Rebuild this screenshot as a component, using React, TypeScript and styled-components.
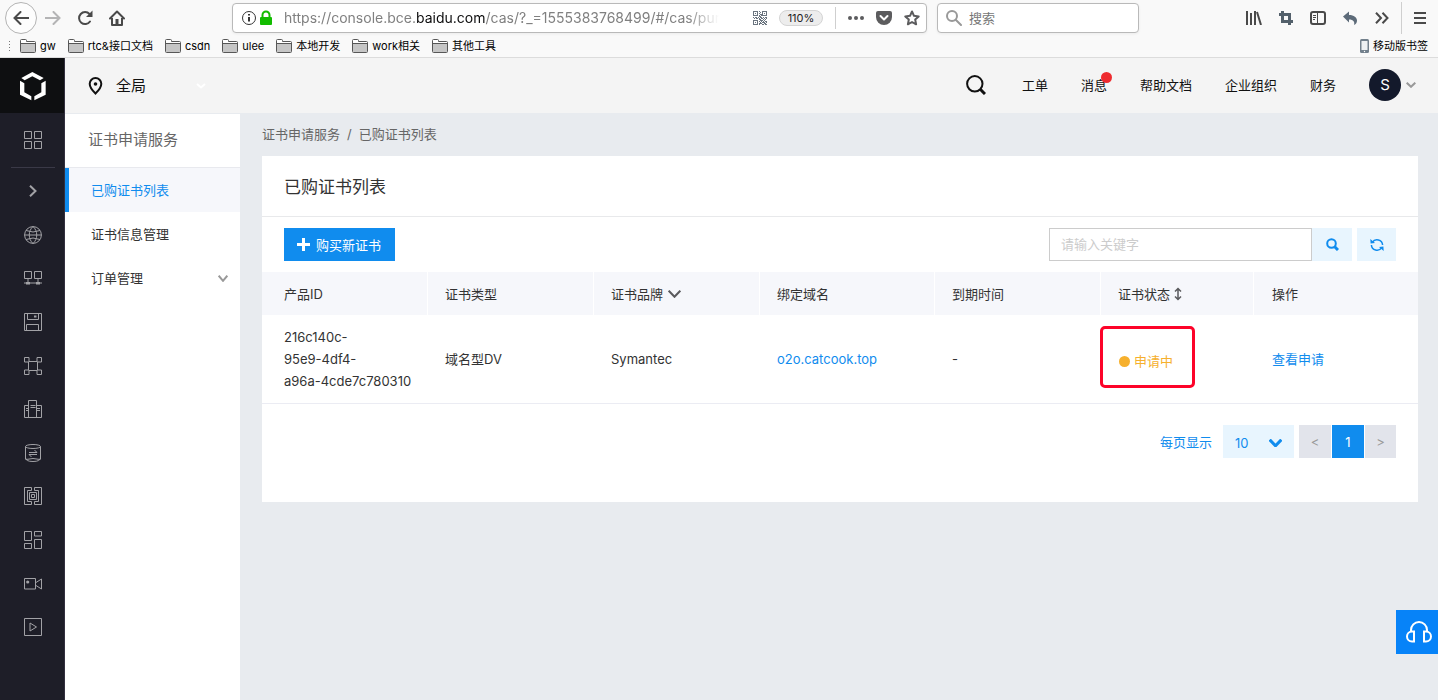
import React from 'react';
import styled, { createGlobalStyle } from 'styled-components';

const blue = '#108cee';
const paleBlue = '#e8f5fe';
const textDark = '#333';

const GlobalStyle = createGlobalStyle`
  * { box-sizing: border-box; }
  html, body, #root { height: 100%; }
  body {
    margin: 0;
    font-family: Inter, "Noto Sans CJK SC", sans-serif;
    font-size: 13px;
    line-height: 22px;
    color: ${textDark};
    background: #e8ebef;
  }
  button, input, select { font: inherit; color: inherit; margin: 0; }
  button { border: 0; padding: 0; background: none; cursor: pointer; }
  a { color: inherit; text-decoration: none; }
  ul { list-style: none; margin: 0; padding: 0; }
  svg { display: block; flex: none; }
`;

const Page = styled.div`
  min-height: 100%;
  display: flex;
  flex-direction: column;
`;

/* ---------- browser chrome ---------- */

const Chrome = styled.header`
  background: #f9f9f9;
  border-bottom: 1px solid #dcdcdc;
`;

const NavBar = styled.div`
  display: flex;
  align-items: center;
  height: 36px;
  padding: 0 0 0 5px;
`;

const ToolButton = styled.button<{ $width?: number }>`
  display: flex;
  align-items: center;
  justify-content: center;
  flex: none;
  width: ${(p) => p.$width ?? 32}px;
  height: 32px;
  color: #4a4a4a;
`;

const BackButton = styled(ToolButton)`
  border: 1px solid #b4b4b4;
  border-radius: 50%;
  background: #fdfdfd;
`;

const Spacer = styled.div`
  flex: 0 1 99px;
`;

const Field = styled.div`
  display: flex;
  align-items: center;
  height: 30px;
  border: 1px solid #b9b9b9;
  border-radius: 4px;
  background: #fff;
  box-shadow: 0 1px 3px rgba(0, 0, 0, 0.06);
`;

const UrlField = styled(Field)`
  flex: 1;
  min-width: 0;
  padding: 0 6px 0 8px;
`;

const UrlText = styled.div`
  flex: 1;
  min-width: 0;
  margin: 0 34px 0 9px;
  overflow: hidden;
  white-space: nowrap;
  font-size: 14px;
  color: #808080;
  mask-image: linear-gradient(to left, transparent, #000 32px);
  strong { font-weight: 400; color: #0c0c0d; }
`;

const Zoom = styled.button`
  width: 44px;
  height: 16px;
  margin: 0 12px;
  border: 1px solid #d4d4d4;
  border-radius: 8px;
  background: #ededed;
  color: #222;
  font-size: 11px;
  line-height: 14px;
`;

const Divider = styled.div<{ $tall?: boolean }>`
  flex: none;
  width: 1px;
  height: ${(p) => (p.$tall ? 32 : 22)}px;
  margin-left: ${(p) => (p.$tall ? 3 : 0)}px;
  background: #cfcfcf;
`;

const UrlActions = styled.div`
  display: flex;
  align-items: center;
  gap: 12px;
  margin-left: 12px;
  color: #5c5c5e;
`;

const SearchField = styled(Field)`
  flex: none;
  width: 202px;
  margin-left: 10px;
  padding: 0 8px;
  gap: 7px;
  color: #999;
  input {
    flex: 1;
    min-width: 0;
    border: 0;
    padding: 0;
    outline: 0;
    background: none;
    &::placeholder { color: #777; opacity: 1; }
  }
`;

const Bookmarks = styled.nav`
  display: flex;
  align-items: center;
  gap: 12px;
  height: 21px;
  padding: 0 10px 1px 9px;
  font-size: 11px;
  line-height: 16px;
  color: #000;
`;

const Grip = styled.span`
  width: 1px;
  height: 11px;
  margin-right: -2px;
  background: repeating-linear-gradient(#777 0 1px, transparent 1px 3px);
`;

const Bookmark = styled.a<{ $end?: boolean }>`
  display: flex;
  align-items: center;
  gap: 4px;
  white-space: nowrap;
  margin-left: ${(p) => (p.$end ? 'auto' : '0')};
`;

/* ---------- console shell ---------- */

const Shell = styled.div`
  flex: 1;
  display: flex;
`;

const Rail = styled.aside`
  flex: none;
  width: 65px;
  border-right: 1px solid #33303f;
  background: #1e1e28;
  color: #a2a2a6;
`;

const Logo = styled.a`
  display: flex;
  align-items: center;
  justify-content: center;
  height: 55px;
  padding-left: 2px;
  background: #0e0f11;
  color: #fff;
`;

const RailButton = styled.button<{ $height?: number }>`
  display: flex;
  align-items: center;
  justify-content: center;
  width: 100%;
  height: ${(p) => (p.$height ? `${p.$height}px` : '100%')};
  padding-left: 2px;
`;

const RailRule = styled.div`
  height: 1px;
  margin: 0 9px 0 11px;
  background: #3a3947;
`;

const RailList = styled.ul`
  display: grid;
  grid-template-rows: repeat(10, 1fr);
  height: 436px;
`;

const Body = styled.div`
  flex: 1;
  min-width: 0;
  display: flex;
  flex-direction: column;
`;

const TopBar = styled.div`
  display: flex;
  align-items: center;
  justify-content: space-between;
  height: 55px;
  padding: 0 22px 0 23px;
  background: #f4f4f4;
`;

const Region = styled.button`
  display: flex;
  align-items: center;
  gap: 13px;
  font-size: 15px;
  color: #111;
  svg:last-child { margin-left: 37px; }
`;

const TopLinks = styled.nav`
  display: flex;
  align-items: center;
  gap: 33px;
  padding-bottom: 2px;
  color: #111;
`;

const FindButton = styled.button`
  margin-right: 3px;
`;

const TopLink = styled.a`
  position: relative;
`;

const Dot = styled.span`
  position: absolute;
  top: -2px;
  right: -5px;
  width: 11px;
  height: 11px;
  border-radius: 50%;
  background: #ee2b2f;
`;

const Account = styled.button`
  display: flex;
  align-items: center;
  gap: 5px;
  color: #999;
`;

const Avatar = styled.span`
  width: 32px;
  height: 32px;
  border-radius: 50%;
  background: #13192b;
  color: #fff;
  font-size: 15px;
  line-height: 32px;
`;

const Content = styled.div`
  flex: 1;
  display: flex;
`;

const Side = styled.nav`
  flex: none;
  width: 175px;
  border-top: 1px solid #e8ebef;
  background: #fff;
`;

const SideTitle = styled.h2`
  margin: 0;
  padding: 14px 23px 16px;
  border-bottom: 1px solid #e8e9ee;
  font-size: 15px;
  font-weight: 400;
  line-height: 23px;
  color: #666;
`;

const SideItem = styled.a<{ $active?: boolean }>`
  display: flex;
  align-items: center;
  justify-content: space-between;
  height: 44px;
  padding: 0 12px 0 22px;
  border-left: 4px solid ${(p) => (p.$active ? blue : 'transparent')};
  background: ${(p) => (p.$active ? '#f6f7fb' : 'transparent')};
  color: ${(p) => (p.$active ? blue : textDark)};
  svg { color: #999; }
`;

const Main = styled.main`
  flex: 1;
  min-width: 0;
  padding: 0 20px 0 22px;
`;

const Crumbs = styled.nav`
  display: flex;
  gap: 7px;
  padding: 10px 0 11px;
  color: #666;
`;

const Card = styled.section`
  padding-bottom: 44px;
  background: #fff;
`;

const CardTitle = styled.h1`
  margin: 0;
  padding: 20px 22px 18px;
  border-bottom: 1px solid #e8e9eb;
  font-size: 17px;
  font-weight: 400;
  line-height: 22px;
`;

const Toolbar = styled.div`
  display: flex;
  align-items: center;
  justify-content: space-between;
  padding: 11px 22px;
`;

const BuyButton = styled.button`
  display: flex;
  align-items: center;
  gap: 6px;
  height: 33px;
  padding: 0 14px 0 13px;
  background: ${blue};
  color: #fff;
`;

const SearchForm = styled.form`
  display: flex;
`;

const Keyword = styled.input`
  width: 263px;
  height: 33px;
  padding: 0 11px 1px;
  border: 1px solid #ccc;
  border-radius: 0;
  outline: 0;
  &::placeholder { color: #ccc; opacity: 1; }
`;

const PaleButton = styled.button<{ $apart?: boolean }>`
  display: flex;
  align-items: center;
  justify-content: center;
  width: ${(p) => (p.$apart ? 39 : 40)}px;
  height: 33px;
  margin-left: ${(p) => (p.$apart ? 5 : 0)}px;
  background: ${paleBlue};
  color: ${blue};
`;

const Table = styled.table`
  width: 100%;
  table-layout: fixed;
  border-collapse: separate;
  border-spacing: 0;
  th, td { text-align: left; font-weight: 400; padding-left: 17px; }
  th:first-child, td:first-child { padding-left: 22px; }
  th:last-child, td:last-child { padding-left: 18px; }
  th {
    height: 43px;
    padding-top: 0;
    padding-bottom: 0;
    background: #f6f7fb;
    border-right: 1px solid #fff;
  }
  th:last-child { border-right: 0; }
  td {
    position: relative;
    padding-top: 11px;
    padding-bottom: 11px;
    border-bottom: 1px solid #ebecf3;
  }
`;

const HeadButton = styled.button<{ $gap: number }>`
  display: flex;
  align-items: center;
  gap: ${(p) => p.$gap}px;
  svg { color: #5a5a5d; }
`;

const IdLine = styled.span`
  display: block;
`;

const BlueLink = styled.a`
  color: ${blue};
`;

const Status = styled.span`
  display: flex;
  align-items: center;
  gap: 4px;
  padding: 4px 0 0 1px;
  color: #f6b02d;
  &::before {
    content: '';
    width: 11px;
    height: 11px;
    border-radius: 50%;
    background: #f6b02d;
  }
`;

const Highlight = styled.span`
  position: absolute;
  top: 11px;
  left: -1px;
  width: 95px;
  height: 62px;
  border: 3px solid #fd0329;
  border-radius: 5px;
  pointer-events: none;
`;

const Pager = styled.div`
  display: flex;
  align-items: center;
  justify-content: flex-end;
  padding: 21px 22px 0;
  color: ${blue};
`;

const SizeBox = styled.span`
  position: relative;
  margin: 0 5px 0 11px;
  select {
    display: block;
    appearance: none;
    width: 71px;
    height: 33px;
    padding: 2px 12px 0;
    border: 0;
    border-radius: 0;
    background: ${paleBlue};
  }
  svg {
    position: absolute;
    top: 14px;
    right: 12px;
    pointer-events: none;
  }
`;

const PageList = styled.div`
  display: flex;
  gap: 1px;
`;

const PageButton = styled.button<{ $current?: boolean }>`
  width: 32px;
  height: 33px;
  background: ${(p) => (p.$current ? blue : '#e2e4eb')};
  color: ${(p) => (p.$current ? '#fff' : '#999')};
  &:last-child { width: 31px; }
`;

const Support = styled.button`
  position: fixed;
  right: 0;
  bottom: 46px;
  display: flex;
  align-items: center;
  justify-content: center;
  width: 42px;
  height: 44px;
  padding-left: 3px;
  background: #0783f8;
  color: #fff;
`;

/* ---------- icons ---------- */

type IconProps = { w: number; h: number; sw?: number; fill?: boolean; children: React.ReactNode };

const Icon = ({ w, h, sw = 1, fill, children }: IconProps) => (
  <svg
    width={w}
    height={h}
    viewBox={`0 0 ${w} ${h}`}
    fill={fill ? 'currentColor' : 'none'}
    stroke={fill ? 'none' : 'currentColor'}
    strokeWidth={sw}
    aria-hidden="true"
  >
    {children}
  </svg>
);

const Chevron = ({ w = 10, h = 6, sw = 2 }: { w?: number; h?: number; sw?: number }) => (
  <Icon w={w} h={h} sw={sw}>
    <path d={`M.7 .7 L${w / 2} ${h - 1.2} L${w - 0.7} .7`} />
  </Icon>
);

const Folder = () => (
  <Icon w={16} h={14}>
    <path d="M.5 1.5q0-1 1-1h4q1 0 1 1v1h8q1 0 1 1v9q0 1-1 1h-13q-1 0-1-1z" fill="#fff" stroke="#575757" />
    <path d="M1 5h14v7.5q0 .5-.5.5h-13q-.5 0-.5-.5z" fill="#c6c6c6" stroke="none" />
    <path d="M1 4.5h14" stroke="#575757" />
  </Icon>
);

const qrCells = [
  '11111010011111', '10001001010001', '10101010010101', '10001001110001', '11111010111111', '00000011000000',
  '10110101101011', '01011010110101', '00000011001010', '11111001110100', '10001010101011', '10101001011101',
  '10001011100110', '11111010011011',
];

const QrIcon = () => (
  <Icon w={14} h={14} fill>
    {qrCells.flatMap((row, y) =>
      [...row].map((c, x) => (c === '1' ? <rect key={`${x}-${y}`} x={x} y={y} width="1" height="1" fill="#6a747f" /> : null)),
    )}
  </Icon>
);

const LogoIcon = () => (
  <svg width="28" height="30" viewBox="60 210 84 90" fill="currentColor" aria-hidden="true">
    <path d="M67 231 100 213l34 18-11 7-23-12-23 12z" />
    <path d="M63 239l13 8v27l21 12v12L63 281z" />
    <path d="M140 239l-13 8v27l-21 12v12l34-17z" />
  </svg>
);

const railIcons: [string, number, React.ReactNode][] = [
  ['网络', 18, <><circle cx="9" cy="9" r="8.4" /><path d="M9 .5C4 5 4 13 9 17.500C14 13 14 5 9 .5M.5 9h17M2 4.500q7 3 14 0M2 13.500q7-3 14 0" /></>],
  ['连接', 14, <><path d="M.5 .5h7v7h-7zM10.500 .5h7v7h-7zM4 8v4M14 8v4M0 12h18" /><path d="M2 11h4v2.500H2zM12 11h4v2.500h-4z" fill="currentColor" stroke="none" /></>],
  ['存储', 18, <><path d="M.5 .5h17v17H.5zM3.500 .5v6h11v-6M2.500 17.500v-6h12v6" /><path d="M10 2.500h2.500v2H10z" fill="currentColor" stroke="none" /></>],
  ['集群', 18, <path d="M.5 .5h4.500v4.500H.5zM13 .5h4.500v4.500H13zM.5 13h4.500v4.500H.5zM13 13h4.500v4.500H13zM5 4.500h8M5 13.500h8M4.500 5v8M13.500 5v8" />],
  ['机房', 18, <path d="M4.500 17.500V.5h8v17M4.500 5.500h-4v12h17v-12h-5M6.500 5.500h5M6.500 7.500h5M2 8.500h2.500M2 10.500h2.500M12.500 8.500H16M12.500 10.500H16" />],
  ['数据库', 18, <><path d="M1.500 2.500v13M16.500 2.500v13" /><ellipse cx="9" cy="2.500" rx="7.500" ry="2" /><path d="M1.500 13.500q0 4 7.500 4t7.500-4M2 15.500q7-2 14 0M5 8.500h8M10.500 6l2.500 2.500M13 10.500H5l2.500 2.500" /></>],
  ['芯片', 18, <path d="M7.500 .5h-7v17h7v-3h-4v-11h4zM10.500 .5h7v17h-7v-3h4v-11h-4zM5.500 5.500h7v7h-7zM7.500 7.500h3v3h-3z" />],
  ['布局', 18, <path d="M.5 .5h7v9h-7zM10.500 .5h7v4.500h-7zM.5 12.500h7v5h-7zM10.500 8.500h7v9h-7z" />],
  ['视频', 12, <><path d="M.5 .5h11v10.500H.5zM12 4.500l5.500-3.500v10L12 7.500" /><circle cx="3.700" cy="4" r="1.600" fill="currentColor" stroke="none" /></>],
  ['播放', 18, <path d="M.5 .5h17v17H.5zM6 5l6.500 4L6 13z" />],
];

/* ---------- data ---------- */

const bookmarks = ['gw', 'rtc&接口文档', 'csdn', 'ulee', '本地开发', 'work相关', '其他工具'];
const columns = [166, 166, 166, 175, 166, 153, 164];

export default function App() {
  return (
    <Page>
      <GlobalStyle />
      <Chrome>
        <NavBar>
          <BackButton aria-label="后退">
            <Icon w={16} h={14} sw={2}><path d="M16 7H1.500M7.500 1L1.500 7l6 6" strokeLinecap="round" /></Icon>
          </BackButton>
          <ToolButton aria-label="前进" disabled>
            <Icon w={16} h={14} sw={2}><path d="M0 7h14.500M8.500 1l6 6-6 6" stroke="#b4b4b5" strokeLinecap="round" /></Icon>
          </ToolButton>
          <ToolButton aria-label="刷新">
            <Icon w={16} h={16} sw={2}>
              <path d="M13 11.500A6 6 0 1 1 12.500 4" strokeLinecap="round" />
              <path d="M15.500 .5v6.500H9z" fill="currentColor" stroke="none" />
            </Icon>
          </ToolButton>
          <ToolButton aria-label="主页">
            <Icon w={16} h={16} sw={2}>
              <path d="M1 8.500L8 1.500l7 7" strokeLinecap="round" strokeLinejoin="round" />
              <path d="M3 8v7h10V8" strokeLinejoin="round" />
              <path d="M6.500 9h3v6h-3z" fill="currentColor" stroke="none" />
            </Icon>
          </ToolButton>
          <Spacer />
          <UrlField>
            <Icon w={16} h={16} sw={1}>
              <circle cx="8" cy="8" r="6.500" />
              <path d="M8 7v4.500M8 4v1.500" strokeWidth="2" />
            </Icon>
            <Icon w={18} h={16} fill>
              <rect x="3" y="7" width="12" height="8" rx="1" fill="#12bc00" />
              <path d="M5.500 8V5a3.500 3.500 0 0 1 7 0v3" fill="none" stroke="#12bc00" strokeWidth="2" />
            </Icon>
            <UrlText role="textbox" aria-label="地址">
              https://console.bce.<strong>baidu.com</strong>/cas/?_=1555383768499/#/cas/purc
            </UrlText>
            <QrIcon />
            <Zoom>110%</Zoom>
            <Divider />
            <UrlActions>
              <Icon w={16} h={16} fill><circle cx="2" cy="8" r="2" /><circle cx="8" cy="8" r="2" /><circle cx="14" cy="8" r="2" /></Icon>
              <Icon w={16} h={16} fill>
                <path d="M2 1h12q2 0 2 2v4a8 8 0 0 1-16 0V3q0-2 2-2z" />
                <path d="M4.500 6L8 9.500 11.500 6" fill="none" stroke="#fff" strokeWidth="2" strokeLinecap="round" strokeLinejoin="round" />
              </Icon>
              <Icon w={16} h={16} sw={2}>
                <path d="M8 1.500l2 4.300 4.700.6-3.500 3.200.9 4.700L8 12l-4.100 2.300.9-4.700L1.300 6.400 6 5.800z" strokeLinejoin="round" />
              </Icon>
            </UrlActions>
          </UrlField>
          <SearchField>
            <Icon w={16} h={16} sw={2}><circle cx="6" cy="6" r="5" /><path d="M9.700 9.700L15 15" strokeLinecap="round" /></Icon>
            <input aria-label="搜索" placeholder="搜索" />
          </SearchField>
          <Spacer />
          <ToolButton aria-label="书库">
            <Icon w={16} h={14} sw={2}><path d="M1 0v14M5 2v12M9 0v14M11 1l4 13" /></Icon>
          </ToolButton>
          <ToolButton aria-label="截图">
            <Icon w={14} h={14} sw={3}><path d="M0 3.500h10.500V14M3.500 0v10.500H14" stroke="#53606b" /></Icon>
          </ToolButton>
          <ToolButton aria-label="侧栏">
            <Icon w={16} h={14} sw={2}><rect x="1" y="1" width="14" height="12" rx="2" /><path d="M7.500 1v12" strokeWidth="1" /><path d="M3 4.500h3M3 6.500h3M3 8.500h2" strokeWidth="1" /></Icon>
          </ToolButton>
          <ToolButton aria-label="撤销">
            <Icon w={14} h={14} fill><path d="M0 5.500L6 .5V4c5 0 8 2.500 8 5.500 0 2-1 3.500-3 4.500 1-3-.5-5.500-5-5.500v3z" fill="#5d6b79" /></Icon>
          </ToolButton>
          <ToolButton aria-label="更多工具">
            <Icon w={14} h={12} sw={2}><path d="M1 .7L6 6l-5 5.300M7.500 .7l5 5.300-5 5.300" /></Icon>
          </ToolButton>
          <Divider $tall />
          <ToolButton aria-label="菜单" $width={36}>
            <Icon w={12} h={12} sw={2}><path d="M0 1h12M0 6h12M0 11h12" /></Icon>
          </ToolButton>
        </NavBar>
        <Bookmarks aria-label="书签">
          <Grip />
          {bookmarks.map((name) => (
            <Bookmark key={name} href="#"><Folder />{name}</Bookmark>
          ))}
          <Bookmark href="#" $end>
            <Icon w={9} h={14} fill>
              <rect width="9" height="14" rx="1.500" fill="#72808c" />
              <rect x="1.500" y="2" width="6" height="9" fill="#eef1f3" />
              <circle cx="4.500" cy="12.500" r=".7" fill="#fff" />
            </Icon>
            移动版书签
          </Bookmark>
        </Bookmarks>
      </Chrome>

      <Shell>
        <Rail>
          <Logo href="#" aria-label="控制台首页"><LogoIcon /></Logo>
          <RailButton aria-label="全部产品" $height={54}>
            <Icon w={18} h={18}><path d="M.5 .5h7v7h-7zM10.500 .5h7v7h-7zM.5 10.500h7v7h-7zM10.500 10.500h7v7h-7z" /></Icon>
          </RailButton>
          <RailRule />
          <RailButton aria-label="展开" $height={45}>
            <Icon w={8} h={12} sw={2}><path d="M1 .7L6.500 6 1 11.300" /></Icon>
          </RailButton>
          <RailList>
            {railIcons.map(([name, h, art]) => (
              <li key={name}>
                <RailButton aria-label={name}><Icon w={18} h={h}>{art}</Icon></RailButton>
              </li>
            ))}
          </RailList>
        </Rail>

        <Body>
          <TopBar>
            <Region>
              <Icon w={15} h={18} sw={2}>
                <path d="M7.500 1a5.800 5.800 0 0 1 5.800 5.800C13.300 11 7.500 16.500 7.500 16.500S1.700 11 1.700 6.800A5.800 5.800 0 0 1 7.500 1z" />
                <circle cx="7.500" cy="7" r="1.800" fill="currentColor" stroke="none" />
              </Icon>
              全局
              <Icon w={10} h={6} sw={2}><path d="M1 1l4 3.500L9 1" stroke="#fff" /></Icon>
            </Region>
            <TopLinks>
              <FindButton aria-label="搜索产品">
                <Icon w={20} h={20} sw={2}><circle cx="8.800" cy="8.800" r="7.700" /><path d="M14 14l5 5" strokeWidth="3" /></Icon>
              </FindButton>
              <TopLink href="#">工单</TopLink>
              <TopLink href="#">消息<Dot /></TopLink>
              <TopLink href="#">帮助文档</TopLink>
              <TopLink href="#">企业组织</TopLink>
              <TopLink href="#">财务</TopLink>
              <Account aria-label="账户"><Avatar>S</Avatar><Chevron /></Account>
            </TopLinks>
          </TopBar>

          <Content>
            <Side>
              <SideTitle>证书申请服务</SideTitle>
              <SideItem href="#" $active>已购证书列表</SideItem>
              <SideItem href="#">证书信息管理</SideItem>
              <SideItem href="#">订单管理<Chevron h={7} /></SideItem>
            </Side>

            <Main>
              <Crumbs aria-label="面包屑">
                <a href="#">证书申请服务</a>
                <span>/</span>
                <span>已购证书列表</span>
              </Crumbs>

              <Card>
                <CardTitle>已购证书列表</CardTitle>
                <Toolbar>
                  <BuyButton>
                    <Icon w={13} h={13} sw={3}><path d="M6.500 0v13M0 6.500h13" /></Icon>
                    购买新证书
                  </BuyButton>
                  <SearchForm onSubmit={(e) => e.preventDefault()}>
                    <Keyword aria-label="关键字" placeholder="请输入关键字" />
                    <PaleButton aria-label="搜索">
                      <Icon w={13} h={13} sw={2}><circle cx="5.500" cy="5.500" r="4.300" /><path d="M8.700 8.700l3.300 3.300" strokeWidth="3" /></Icon>
                    </PaleButton>
                    <PaleButton type="button" aria-label="刷新列表" $apart>
                      <Icon w={14} h={14} sw={1.5}>
                        <path d="M2.300 4.300A5.600 5.600 0 0 1 12.600 7M11.700 9.700A5.600 5.600 0 0 1 1.400 7" />
                        <path d="M.3 1l.3 4.500 4.400-.5zM13.700 13l-.3-4.500-4.400.5z" fill="currentColor" stroke="none" />
                      </Icon>
                    </PaleButton>
                  </SearchForm>
                </Toolbar>

                <Table>
                  <colgroup>{columns.map((w, i) => <col key={i} width={w} />)}</colgroup>
                  <thead>
                    <tr>
                      <th>产品ID</th>
                      <th>证书类型</th>
                      <th><HeadButton $gap={5}>证书品牌<Chevron w={13} h={8} /></HeadButton></th>
                      <th>绑定域名</th>
                      <th>到期时间</th>
                      <th>
                        <HeadButton $gap={4}>
                          证书状态
                          <Icon w={8} h={14} sw={1.5}><path d="M4 1.500v11M1 4.500l3-3 3 3M1 9.500l3 3 3-3" /></Icon>
                        </HeadButton>
                      </th>
                      <th>操作</th>
                    </tr>
                  </thead>
                  <tbody>
                    <tr>
                      <td>
                        <IdLine>216c140c-</IdLine>
                        <IdLine>95e9-4df4-</IdLine>
                        <IdLine>a96a-4cde7c780310</IdLine>
                      </td>
                      <td>域名型DV</td>
                      <td>Symantec</td>
                      <td><BlueLink href="#">o2o.catcook.top</BlueLink></td>
                      <td>-</td>
                      <td><Status>申请中</Status><Highlight /></td>
                      <td><BlueLink href="#">查看申请</BlueLink></td>
                    </tr>
                  </tbody>
                </Table>

                <Pager>
                  <label htmlFor="page-size">每页显示</label>
                  <SizeBox>
                    <select id="page-size" defaultValue="10">
                      <option>10</option>
                      <option>20</option>
                      <option>50</option>
                    </select>
                    <Chevron w={13} h={8} sw={3} />
                  </SizeBox>
                  <PageList>
                    <PageButton aria-label="上一页">&lt;</PageButton>
                    <PageButton $current>1</PageButton>
                    <PageButton aria-label="下一页">&gt;</PageButton>
                  </PageList>
                </Pager>
              </Card>
            </Main>
          </Content>
        </Body>
      </Shell>

      <Support aria-label="在线客服">
        <Icon w={26} h={22} sw={2}>
          <path d="M5 10V9a8 8 0 0 1 16 0v1" />
          <path d="M8 10.500v10H6a5 5 0 0 1 0-10zM18 10.500v10h2a5 5 0 0 0 0-10z" />
        </Icon>
      </Support>
    </Page>
  );
}
